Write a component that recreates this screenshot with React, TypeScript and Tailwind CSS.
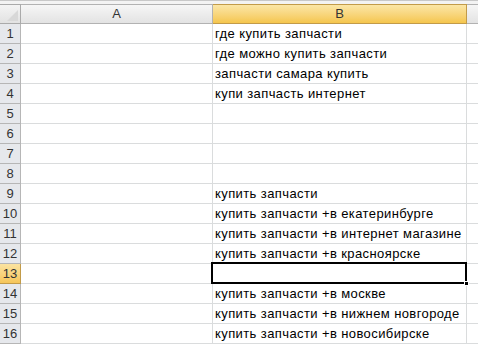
const ROWS: string[] = [
  'где купить запчасти',
  'где можно купить запчасти',
  'запчасти самара купить',
  'купи запчасть интернет',
  '',
  '',
  '',
  '',
  'купить запчасти',
  'купить запчасти +в екатеринбурге',
  'купить запчасти +в интернет магазине',
  'купить запчасти +в красноярске',
  '',
  'купить запчасти +в москве',
  'купить запчасти +в нижнем новгороде',
  'купить запчасти +в новосибирске',
];

const SELECTED = 13;

export default function App() {
  return (
    <div className="w-[478px] h-[345px] overflow-hidden bg-white font-['Liberation_Sans',Arial,sans-serif] text-[13px] text-black">
      <div className="h-[4px] bg-[#f3f3f3] border-t border-[#c8c8c8]" />
      <div className="grid grid-cols-[21px_192px_254px_11px] grid-rows-[20px] auto-rows-[20px]">
        {/* header row */}
        <div className="relative bg-gradient-to-b from-[#f4f4f4] to-[#e2e2e2] border-r border-b border-t border-[#aaaaaa]">
          <div className="absolute right-[2px] bottom-[2px] w-0 h-0 border-l-[11px] border-l-transparent border-b-[11px] border-b-[#d8d8d8]" />
        </div>
        <div className="flex items-center justify-center bg-gradient-to-b from-[#f6f6f6] to-[#e3e3e3] border-r border-b border-t border-[#b2b2b2] text-[#333]">
          A
        </div>
        <div className="flex items-center justify-center bg-gradient-to-b from-[#fbe6a6] to-[#f5c64c] border-r border-b border-t border-[#c29b49] text-[#333]">
          B
        </div>
        <div className="bg-gradient-to-b from-[#f6f6f6] to-[#e3e3e3] border-b border-t border-[#b2b2b2]" />

        {ROWS.map((text, i) => {
          const n = i + 1;
          const sel = n === SELECTED;
          return [
            <div
              key={`h${n}`}
              className={
                sel
                  ? 'flex items-center justify-center bg-gradient-to-b from-[#fbe3a0] to-[#f6c659] border-r border-b border-[#c29b49] text-[#333]'
                  : 'flex items-center justify-center bg-[#e6e8ec] border-r border-b border-[#b6b6b6] text-[#333]'
              }
            >
              {n}
            </div>,
            <div key={`a${n}`} className="border-r border-b border-[#dadcdd]" />,
            sel ? (
              <div key={`b${n}`} className="relative border-r border-b border-[#dadcdd]">
                <div className="absolute left-[-2px] top-[-2px] right-[-1px] bottom-[-1px] border-2 border-black" />
                <div className="absolute right-[-3px] bottom-[-3px] w-[5px] h-[5px] bg-black border border-white" />
              </div>
            ) : (
              <div key={`b${n}`} className="flex items-center pl-[2px] border-r border-b border-[#dadcdd] whitespace-nowrap overflow-hidden tracking-[0.4px]">
                {text}
              </div>
            ),
            <div key={`c${n}`} className="border-b border-[#dadcdd]" />,
          ];
        })}
      </div>
    </div>
  );
}
